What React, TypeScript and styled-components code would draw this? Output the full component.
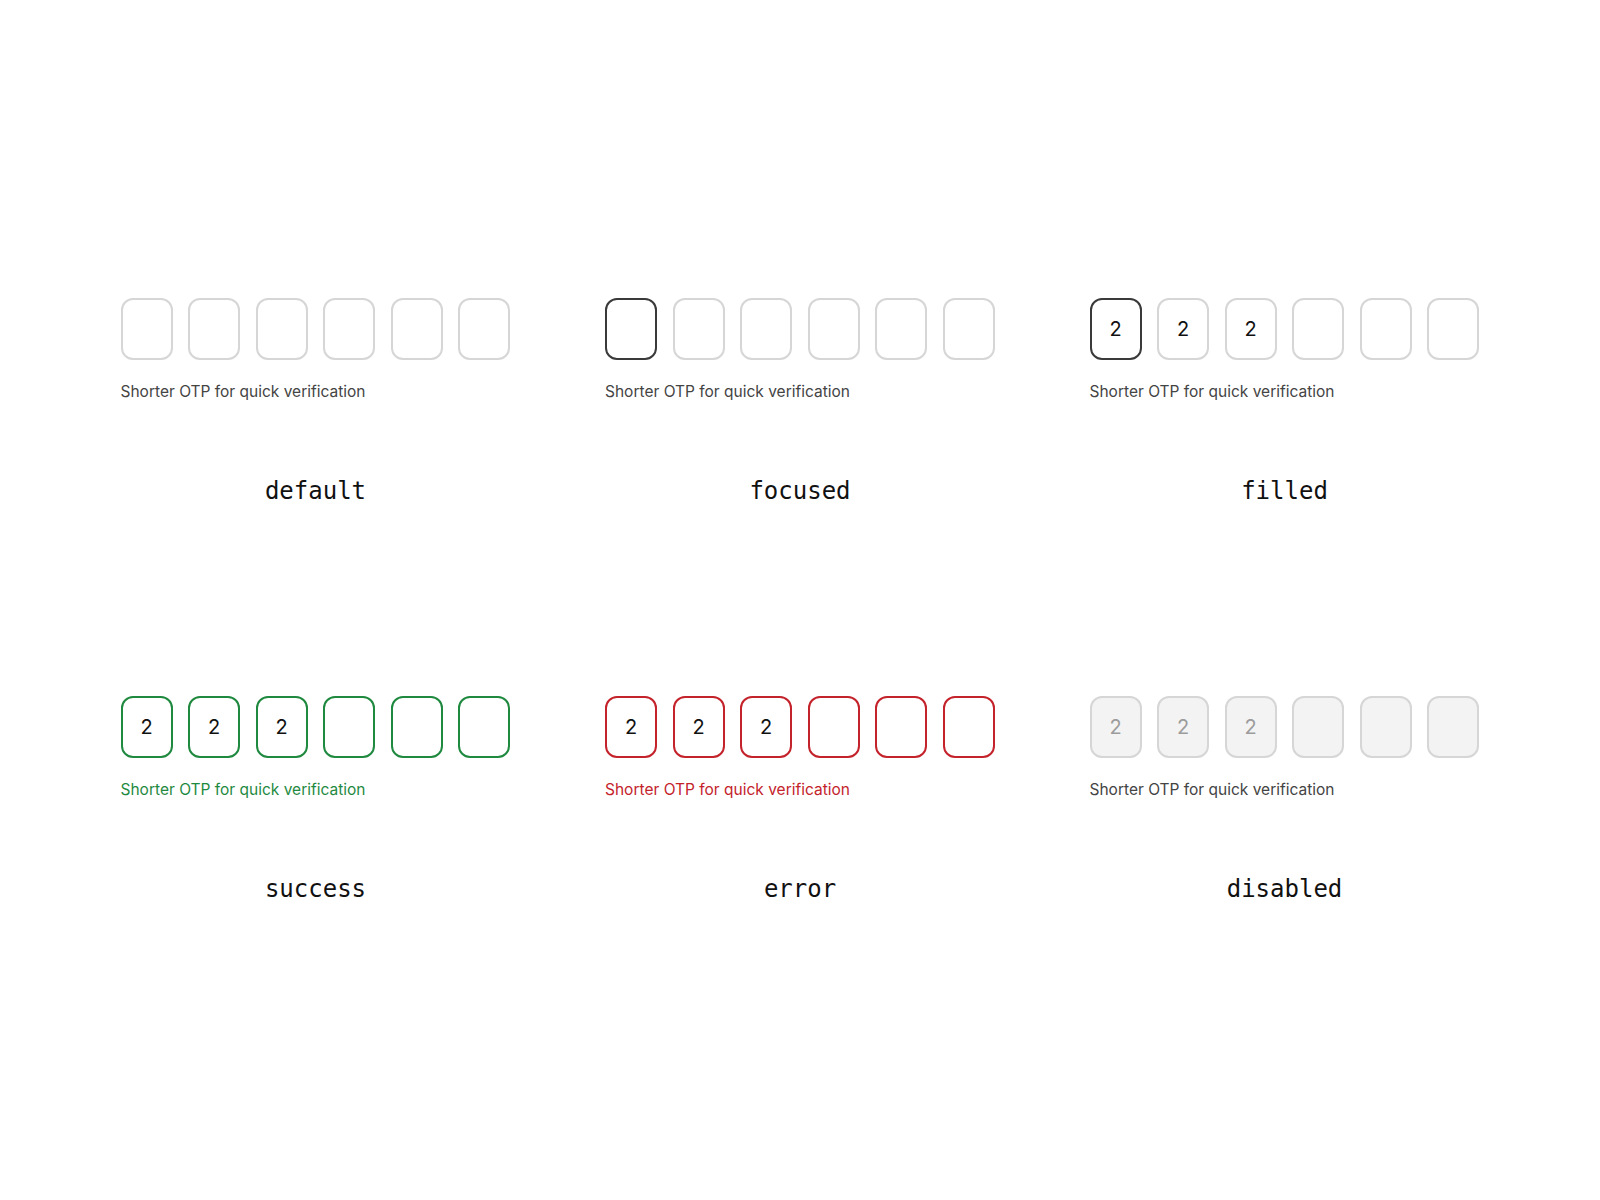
import React from 'react'
import styled, { createGlobalStyle } from 'styled-components'

type Variant = 'default' | 'focused' | 'filled' | 'success' | 'error' | 'disabled'

const borderFor: Record<Variant, string> = {
  default: '#d6d6d6',
  focused: '#d6d6d6',
  filled: '#d6d6d6',
  success: '#1f8a3f',
  error: '#c4232b',
  disabled: '#d6d6d6',
}

const helperFor: Record<Variant, string> = {
  default: '#444444',
  focused: '#444444',
  filled: '#444444',
  success: '#1f8a3f',
  error: '#c4232b',
  disabled: '#444444',
}

const states: { variant: Variant; values: string[]; active?: number }[] = [
  { variant: 'default', values: [] },
  { variant: 'focused', values: [], active: 0 },
  { variant: 'filled', values: ['2', '2', '2'], active: 0 },
  { variant: 'success', values: ['2', '2', '2'] },
  { variant: 'error', values: ['2', '2', '2'] },
  { variant: 'disabled', values: ['2', '2', '2'] },
]

export default function App() {
  return (
    <>
      <GlobalStyle />
      <Page>
        <Grid>
          {states.map(({ variant, values, active }) => (
            <Cell key={variant}>
              <Boxes>
                {Array.from({ length: 6 }).map((_, i) => (
                  <Box
                    key={i}
                    $border={i === active ? '#3a3a3a' : borderFor[variant]}
                    $disabled={variant === 'disabled'}
                  >
                    {values[i] ?? ''}
                  </Box>
                ))}
              </Boxes>
              <Helper $color={helperFor[variant]}>Shorter OTP for quick verification</Helper>
              <Label>{variant}</Label>
            </Cell>
          ))}
        </Grid>
      </Page>
    </>
  )
}

const GlobalStyle = createGlobalStyle`
  body {
    margin: 0;
    background: #ffffff;
    font-family: Inter, 'Noto Sans', sans-serif;
  }
`
const Page = styled.div`
  display: flex;
  justify-content: center;
  padding-top: 298px;
  min-height: 1200px;
  box-sizing: border-box;
`
const Grid = styled.div`
  display: grid;
  grid-template-columns: repeat(3, 390px);
  column-gap: 94.5px;
  row-gap: 190px;
  align-content: start;
`
const Cell = styled.div`
  display: flex;
  flex-direction: column;
  width: 390px;
`
const Boxes = styled.div`
  display: flex;
  gap: 15.6px;
`
const Box = styled.div<{ $border: string; $disabled: boolean }>`
  box-sizing: border-box;
  width: 52px;
  height: 62px;
  display: flex;
  align-items: center;
  justify-content: center;
  border: 2.2px solid ${p => p.$border};
  border-radius: 12px;
  background: ${p => (p.$disabled ? '#f3f3f3' : '#ffffff')};
  color: ${p => (p.$disabled ? '#9c9c9c' : '#111111')};
  font-family: Inter, sans-serif;
  font-size: 20px;
`
const Helper = styled.div<{ $color: string }>`
  margin-top: 22px;
  font-family: Inter, sans-serif;
  font-size: 15.5px;
  line-height: 20px;
  color: ${p => p.$color};
`
const Label = styled.div`
  margin-top: 74px;
  text-align: center;
  font-family: 'DejaVu Sans Mono', monospace;
  font-size: 24px;
  line-height: 30px;
  color: #111111;
`
